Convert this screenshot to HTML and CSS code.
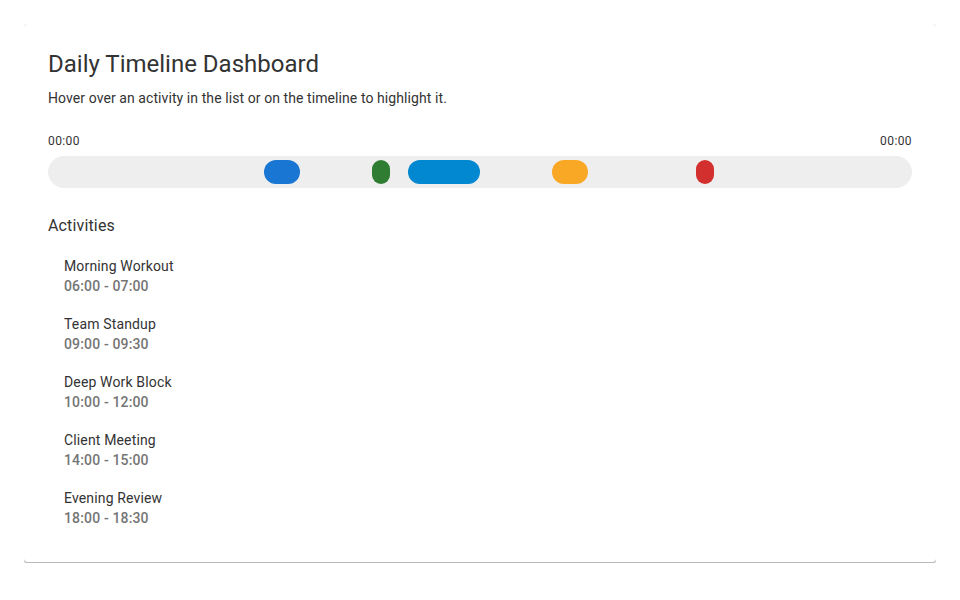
FILE: index.html
```html
<!DOCTYPE html>
<html lang="en">
<head>
    <meta charset="UTF-8">
    <meta name="viewport" content="width=device-width, initial-scale=1.0">
    <title>Daily Timeline Dashboard</title>
    <link rel="stylesheet" href="styles.css">
</head>
<body>
    <div class="card">
        <h1 class="title">Daily Timeline Dashboard</h1>
        <p class="subtitle">Hover over an activity in the list or on the timeline to highlight it.</p>

        <!-- Timeline -->
        <div class="timeline-labels">
            <span>00:00</span>
            <span>00:00</span>
        </div>
        <div class="timeline-track" id="timeline-track"></div>

        <!-- Activities -->
        <h2 class="section-title">Activities</h2>
        <ul class="activity-list" id="activity-list"></ul>
    </div>

    <script>
        document.addEventListener('DOMContentLoaded', () => {
            const activities = [
                { id: 1, name: 'Morning Workout', start: '06:00', end: '07:00', color: '#1976d2' },
                { id: 2, name: 'Team Standup', start: '09:00', end: '09:30', color: '#2e7d32' },
                { id: 3, name: 'Deep Work Block', start: '10:00', end: '12:00', color: '#0288d1' },
                { id: 4, name: 'Client Meeting', start: '14:00', end: '15:00', color: '#f9a825' },
                { id: 5, name: 'Evening Review', start: '18:00', end: '18:30', color: '#d32f2f' }
            ];

            const track = document.getElementById('timeline-track');
            const list = document.getElementById('activity-list');

            // Convert "HH:MM" to hours
            const toHours = (time) => {
                const [h, m] = time.split(':').map(Number);
                return h + m / 60;
            };

            const setActive = (id) => {
                document.querySelectorAll('[data-id]').forEach((el) => {
                    el.classList.toggle('active', Number(el.dataset.id) === id);
                });
            };

            activities.forEach((activity) => {
                const start = toHours(activity.start);
                const end = toHours(activity.end);

                // Segment on the timeline
                const segment = document.createElement('div');
                segment.className = 'segment';
                segment.dataset.id = activity.id;
                segment.title = activity.name;
                segment.style.left = (start / 24 * 100) + '%';
                segment.style.width = ((end - start) / 24 * 100) + '%';
                segment.style.backgroundColor = activity.color;
                track.appendChild(segment);

                // Item in the list
                const item = document.createElement('li');
                item.className = 'activity-item';
                item.dataset.id = activity.id;
                item.innerHTML = `
                    <div class="activity-name">${activity.name}</div>
                    <div class="activity-time">${activity.start} - ${activity.end}</div>
                `;
                list.appendChild(item);

                [segment, item].forEach((el) => {
                    el.addEventListener('mouseenter', () => setActive(activity.id));
                    el.addEventListener('mouseleave', () => setActive(null));
                });
            });
        });
    </script>
</body>
</html>
```

FILE: styles.css
```css
body {
    font-family: Roboto, "Liberation Sans", Arial, sans-serif;
    background-color: #fff;
    color: #333;
    margin: 24px;
}
.card {
    background-color: #fff;
    border-radius: 4px;
    border-bottom: 1px solid #b8b8b8;
    box-shadow: 0 1px 2px rgba(0, 0, 0, 0.2), 0 0 1px rgba(0, 0, 0, 0.15);
    padding: 24px 24px 25px;
}
.title {
    font-size: 24px;
    font-weight: 400;
    line-height: 32px;
    margin: 0 0 8px;
}
.subtitle {
    font-size: 14px;
    line-height: 20px;
    letter-spacing: 0.08px;
    margin: 0 0 23px;
}
.timeline-labels {
    display: flex;
    justify-content: space-between;
    font-size: 12px;
    line-height: 20px;
    letter-spacing: 0.03333em;
    margin-bottom: 5px;
}
.timeline-track {
    position: relative;
    height: 32px;
    background-color: #eee;
    border-radius: 16px;
}
.segment {
    position: absolute;
    top: 4px;
    height: 24px;
    border-radius: 12px;
    cursor: pointer;
    transition: transform 0.15s, box-shadow 0.15s;
}
.segment.active {
    transform: scaleY(1.15);
    box-shadow: 0 0 0 2px rgba(0, 0, 0, 0.25);
}
.section-title {
    font-size: 16px;
    font-weight: 400;
    line-height: 24px;
    letter-spacing: 0.00938em;
    margin: 26px 0 9px;
}
.activity-list {
    list-style: none;
    margin: 0;
    padding: 0;
}
.activity-item {
    padding: 9px 16px;
    border-radius: 4px;
    cursor: pointer;
}
.activity-item.active {
    background-color: rgba(25, 118, 210, 0.08);
}
.activity-name {
    font-size: 14px;
    line-height: 20px;
    letter-spacing: 0.01071em;
}
.activity-time {
    font-size: 14px;
    font-weight: 500;
    line-height: 20px;
    letter-spacing: 0.01071em;
    color: #757575;
}
```
